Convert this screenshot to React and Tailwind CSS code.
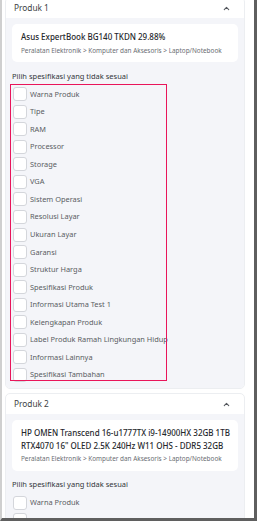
import { ChevronUp } from 'lucide-react';

const specs = [
  'Warna Produk',
  'Tipe',
  'RAM',
  'Processor',
  'Storage',
  'VGA',
  'Sistem Operasi',
  'Resolusi Layar',
  'Ukuran Layar',
  'Garansi',
  'Struktur Harga',
  'Spesifikasi Produk',
  'Informasi Utama Test 1',
  'Kelengkapan Produk',
  'Label Produk Ramah Lingkungan Hidup',
  'Informasi Lainnya',
  'Spesifikasi Tambahan',
];

function SpecRow({ label }) {
  return (
    <label className="flex items-center gap-[3px] h-[17.55px] whitespace-nowrap">
      <span className="w-[14px] h-[14px] shrink-0 rounded-[3px] border border-[#d4d6db] bg-white" />
      <span className="text-[7.4px] text-[#5a5d63]">{label}</span>
    </label>
  );
}

function ProductCard({ title, lines, highlight }) {
  return (
    <section className="rounded-[5px] border border-[#eceef1] bg-white overflow-hidden">
      <header className="flex items-center justify-between h-[20px] pl-[8px] pr-[13px]">
        <h2 className="text-[8.3px] text-[#3d3f44]">{title}</h2>
        <ChevronUp className="w-[9px] h-[9px] text-[#55585e]" strokeWidth={2.8} />
      </header>
      <div className="bg-[#f4f5f9] px-[6px] pt-[6px] pb-[4.4px]">
        <div className="rounded-[5px] bg-white px-[9px] pt-[7px] pb-[6.5px]">
          {lines.map(line => (
            <p key={line} className="text-[8px] leading-[12.5px] text-[#26282c] font-medium whitespace-nowrap">{line}</p>
          ))}
          <p className="mt-[2.2px] text-[6.4px] leading-[10px] text-[#6a6d73] whitespace-nowrap">Peralatan Elektronik &gt; Komputer dan Aksesoris &gt; Laptop/Notebook</p>
        </div>
        <p className="mt-[8.5px] text-[7.5px] leading-[11px] text-[#333539]">Pilih spesifikasi yang tidak sesuai</p>
        <div className="relative mt-[3.7px] pl-[1px]">
          {specs.map(s => (
            <SpecRow key={s} label={s} />
          ))}
          {highlight && (
            <div className="absolute -top-[1.2px] bottom-[2.5px] -left-[2px] w-[157px] border-[1.5px] border-[#e9155a] pointer-events-none" />
          )}
        </div>
      </div>
    </section>
  );
}

export default function App() {
  return (
    <div className="w-[257px] h-[521px] overflow-hidden bg-white border-l-2 border-l-[#cfcfcf] border-r-[3px] border-r-[#5f5f5f] border-b-[3px] border-b-[#5f5f5f]" style={{ fontFamily: '"Noto Sans", "Open Sans", sans-serif' }}>
      <div className="pl-[3px] pr-[9px] -mt-[3px] flex flex-col gap-[4px]">
        <ProductCard title="Produk 1" lines={['Asus ExpertBook BG140 TKDN 29.88%']} highlight />
        <ProductCard
          title="Produk 2"
          lines={['HP OMEN Transcend 16-u1777TX i9-14900HX 32GB 1TB', 'RTX4070 16" OLED 2.5K 240Hz W11 OHS - DDR5 32GB']}
        />
      </div>
    </div>
  );
}
